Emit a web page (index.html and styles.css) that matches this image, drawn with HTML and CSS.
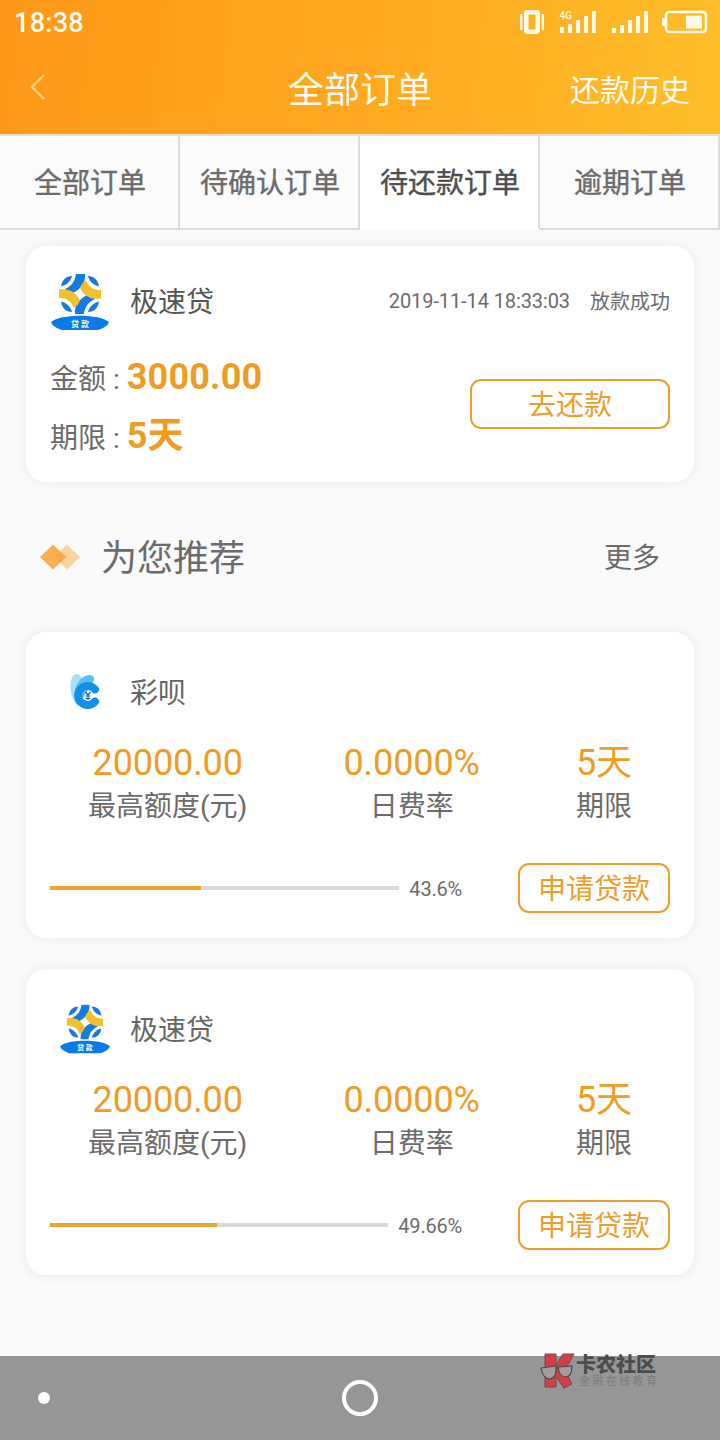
FILE: index.html
```html
<!DOCTYPE html>
<html lang="zh-CN">
<head>
<meta charset="utf-8">
<title>全部订单</title>
<link rel="stylesheet" href="styles.css">
</head>
<body>
<div class="screen">
  <header class="header">
    <div class="status">
      <span class="clock">18:38</span>
      <svg class="status-icons" width="190" height="28" viewBox="0 0 190 28" fill="#fffbe8">
        <path fill-rule="evenodd" d="M7 2H19L21 4V24L19 26H7L5 24V4Z M9.500 6.500V21.500H16.500V6.500Z"/>
        <path d="M1 6H3.500V22H1Z M22.500 6H25V22H22.500Z"/>
        <path d="M41 19h4v6h-4z M49 16h4v9h-4z M57 12h4v13h-4z M65 8h4v17h-4z M73 3h4v22h-4z"/>
        <path d="M93 20h4v5h-4z M101 17h4v8h-4z M109 12h4v13h-4z M117 8h4v17h-4z M125 3h4v22h-4z"/>
        <text class="net-text" x="40.500" y="10.500">4G</text>
        <rect x="147" y="4" width="40" height="20" rx="3.500" fill="none" stroke="#fffbe8" stroke-width="2.600"/>
        <path d="M143 10h3v8h-3z M167 7.500h16v13h-16z"/>
      </svg>
    </div>
    <div class="titlebar">
      <svg class="back" width="18" height="28" viewBox="0 0 18 28"><path d="M16 2 L4 14 L16 26" fill="none" stroke="#ffd080" stroke-width="2.400"/></svg>
      <h1 class="title">全部订单</h1>
      <span class="history">还款历史</span>
    </div>
  </header>
  <nav class="tabs">
    <span class="tab">全部订单</span>
    <span class="tab">待确认订单</span>
    <span class="tab active">待还款订单</span>
    <span class="tab">逾期订单</span>
  </nav>
  <main class="content">
    <section class="card order">
      <div class="order-head">
        <svg class="logo-lg" width="58" height="58" viewBox="0 0 58 58">
          <g id="loan-logo">
            <g fill="#1b76dc">
              <path d="M10 13.500 C11 7 15 3 21 3 C20 8 16 12 10 13.500Z"/>
              <path d="M48 13.500 C47 7 43 3 37 3 C38 8 42 12 48 13.500Z"/>
              <path d="M10 28.500 C11 35 15 39 21 39 C20 34 16 30 10 28.500Z"/>
              <path d="M48 28.500 C47 35 43 39 37 39 C38 34 42 30 48 28.500Z"/>
            </g>
            <path d="M25 1 H34 C35 9 30 16 22 20 C19 20 16 18 14 16 C21 13 24 8 25 1Z" fill="#147be3"/>
            <path d="M33 41 H24 C23 33 28 26 36 22 C39 22 42 24 44 26 C37 29 34 34 33 41Z" fill="#147be3"/>
            <path d="M8 16.500 C17 15 24 18 29 27 C28 30 26 33 23 35 C20 28 16 25 8 25Z" fill="#f1c02d"/>
            <path d="M50 25.500 C41 27 34 24 29 15 C30 12 32 9 35 7 C38 14 42 17 50 17Z" fill="#f1c02d"/>
            <path d="M0 49 C9 40.500 49 40.500 58 49 C56 54 51 55.500 47 57 H11 C7 55.500 2 54 0 49Z" fill="#087be9"/>
            <text class="logo-text" x="29" y="53.500" text-anchor="middle">贷 款</text>
          </g>
        </svg>
        <span class="name">极速贷</span>
        <span class="date">2019-11-14 18:33:03</span>
        <span class="state">放款成功</span>
      </div>
      <div class="order-body">
        <div class="facts">
          <div class="fact">金额 : <b class="strong">3000.00</b></div>
          <div class="fact">期限 : <b class="strong">5天</b></div>
        </div>
        <span class="btn btn-pay">去还款</span>
      </div>
    </section>
    <div class="section-head">
      <svg width="40" height="28" viewBox="0 0 40 28"><path d="M27 1.500L40 14L27 26.500L14 14Z" fill="#fbd49c"/><path d="M13 1.500L26 14L13 26.500L0 14Z" fill="#f9af52"/><path d="M20 8L26 14L20 20L14 14Z" fill="#f9a847"/></svg>
      <h2 class="section-title">为您推荐</h2>
      <span class="more">更多</span>
    </div>
    <section class="card offer">
      <div class="offer-head">
        <svg class="logo-sm" width="50" height="50" viewBox="0 0 50 50">
          <path d="M17 38 C9 30 9 12 14 8 C18 6 22 8 22 14Z" fill="#a5e0f7"/>
          <path d="M18 38 C10 28 17 9 29 8 C34 8 36 12 32 17Z" fill="#56c2f3"/>
          <path d="M35 22.500 A9.500 9.500 0 1 0 35 34.500" fill="none" stroke="#128fe9" stroke-width="8" stroke-linecap="round"/>
          <path d="M25.500 25l2.500 3 2.500-3 M28 28v5 M25.500 29h5 M25.500 31.500h5" fill="none" stroke="#17629b" stroke-width="1.200"/>
        </svg>
        <span class="name">彩呗</span>
      </div>
      <div class="stats">
        <div class="stat"><span class="value">20000.00</span><span class="label">最高额度(元)</span></div>
        <div class="stat"><span class="value">0.0000%</span><span class="label">日费率</span></div>
        <div class="stat"><span class="value">5天</span><span class="label">期限</span></div>
      </div>
      <div class="offer-foot">
        <div class="progress"><div class="track"><div class="fill" style="width:43.1%"></div></div><span class="pct">43.6%</span></div>
        <span class="btn btn-apply">申请贷款</span>
      </div>
    </section>
    <section class="card offer">
      <div class="offer-head">
        <svg class="logo-sm" width="50" height="50" viewBox="0 0 58 58"><use href="#loan-logo"/></svg>
        <span class="name">极速贷</span>
      </div>
      <div class="stats">
        <div class="stat"><span class="value">20000.00</span><span class="label">最高额度(元)</span></div>
        <div class="stat"><span class="value">0.0000%</span><span class="label">日费率</span></div>
        <div class="stat"><span class="value">5天</span><span class="label">期限</span></div>
      </div>
      <div class="offer-foot">
        <div class="progress"><div class="track"><div class="fill" style="width:49.3%"></div></div><span class="pct">49.66%</span></div>
        <span class="btn btn-apply">申请贷款</span>
      </div>
    </section>
  </main>
  <footer class="navbar">
    <span class="dot"></span>
    <span class="ring"></span>
  </footer>
  <div class="watermark">
    <svg width="36" height="36" viewBox="0 0 36 36">
      <path d="M5 1H16V12L23 1H34L25 17L32 31L24 35L16 24V34H5Z" fill="#d23f49" stroke="#704b4f" stroke-width="1"/>
      <path d="M1 15L16 13Q17 25 10 26Q3 26 1 15Z M18 14L32 13Q32 24 25 24Q19 23 18 14Z" fill="#a49c9c" stroke="#504b4b" stroke-width="1.200"/>
      <path d="M16 15L18 15" stroke="#504b4b" stroke-width="1.400"/>
    </svg>
    <div class="mark-text"><span class="mark-name">卡农社区</span><span class="mark-sub">金融在线教育</span></div>
  </div>
</div>
</body>
</html>
```

FILE: styles.css
```css
* { box-sizing: border-box; }
body {
  margin: 0;
  background: #fafafa;
  color: #6b6b6b;
  font-family: Roboto, "Noto Sans CJK SC", sans-serif;
  font-size: 28px;
}
.screen {
  position: relative;
  width: 720px;
  height: 1440px;
  display: flex;
  flex-direction: column;
  overflow: hidden;
}
.header {
  height: 136px;
  background: linear-gradient(98deg, #ff9819 0%, #ffa81f 50%, #febe29 100%);
  border-bottom: 2px solid #eadfce;
  color: #fffaf0;
}
.status {
  height: 44px;
  display: flex;
  justify-content: space-between;
  align-items: center;
  padding: 0 11px 0 14px;
}
.clock { font-size: 27px; font-weight: 500; line-height: 44px; padding-top: 2px; letter-spacing: 0.3px; }
.status-icons { display: block; }
.net-text { font: 500 10px Roboto, sans-serif; }
.titlebar {
  height: 90px;
  display: grid;
  grid-template-columns: 180px 1fr 180px;
  align-items: center;
  padding: 0 30px 0 28px;
}
.back { margin-top: -4px; }
.title { margin: 0; padding: 4px 0 0 2px; text-align: center; font-size: 36px; font-weight: 400; line-height: 60px; }
.history { padding-top: 3px; text-align: right; font-size: 30px; line-height: 60px; }
.tabs { display: grid; grid-template-columns: repeat(4, 1fr); height: 94px; }
.tab {
  height: 94px;
  padding: 3px 0 0 2px;
  border-right: 2px solid #dcdcdc;
  border-bottom: 2px solid #dcdcdc;
  background: #fbfbfb;
  text-align: center;
  line-height: 89px;
  -webkit-text-stroke: 0.4px currentColor;
}
.tab.active { background: #fff; border-bottom-color: #fff; color: #4d4d4d; }
.content { flex: 1; padding: 16px 26px 0; }
.card {
  background: #fff;
  border-radius: 20px;
  box-shadow: 0 0 12px rgba(0, 0, 0, 0.08);
  padding: 24px;
}
.order { height: 236px; }
.order-head { height: 62px; display: flex; align-items: center; }
.logo-lg { margin: 1px 21px 0 1px; }
.logo-text { font: 700 8px "Noto Sans CJK SC", sans-serif; fill: #fff; }
.name { color: #555; line-height: 40px; padding-top: 3px; }
.date { margin-left: auto; font-size: 20px; letter-spacing: -0.1px; }
.state { margin-left: 20px; font-size: 20px; margin-top: -2px; }
.order-body { display: flex; justify-content: space-between; margin-top: 17px; }
.facts { display: flex; flex-direction: column; }
.fact { height: 59px; line-height: 56px; white-space: nowrap; }
.strong { color: #ef9c25; font-size: 36px; font-weight: 700; letter-spacing: 0.2px; }
.btn {
  display: block;
  height: 50px;
  line-height: 49px;
  border: 2px solid #ed9d2a;
  border-radius: 11px;
  color: #ed9d2a;
  text-align: center;
}
.btn-pay { width: 200px; margin-top: 30px; }
.section-head { height: 150px; display: flex; align-items: center; padding: 0 34px 0 14px; }
.section-title { margin: 0 0 0 21px; padding-top: 4px; font-size: 36px; font-weight: 400; line-height: 54px; }
.more { margin-left: auto; margin-top: -2px; }
.offer { height: 306px; }
.offer + .offer { margin-top: 31px; }
.offer-head { height: 72px; display: flex; align-items: center; padding-left: 10px; }
.logo-sm { margin-right: 20px; }
.offer-head .name { color: #666; }
.stats { display: flex; justify-content: space-between; padding: 0 38px; margin-top: 12px; }
.stat { display: flex; flex-direction: column; align-items: center; }
.value { color: #ef9c25; font-size: 36px; line-height: 46px; letter-spacing: -0.1px; }
.label { line-height: 41px; }
.offer-foot { display: flex; justify-content: space-between; align-items: center; margin-top: 36px; }
.progress { width: 412px; display: flex; align-items: center; gap: 10px; }
.track { flex: 1; height: 4px; background: #d9d9d9; margin-top: -1px; }
.fill { height: 4px; background: #eaa42f; }
.pct { font-size: 20px; line-height: 24px; padding-top: 2px; letter-spacing: -0.2px; }
.btn-apply { width: 152px; }
.navbar {
  height: 84px;
  background: #969696;
  display: grid;
  grid-template-columns: 1fr 36px 1fr;
  align-items: center;
}
.dot { width: 12px; height: 12px; margin-left: 38px; border-radius: 50%; background: #fff; }
.ring { width: 36px; height: 36px; border: 4px solid #fff; border-radius: 50%; }
.watermark { position: absolute; left: 540px; top: 1353px; display: flex; }
.mark-text { display: flex; flex-direction: column; padding-top: 1px; }
.mark-name { color: #4c4c4c; font-size: 20px; font-weight: 900; line-height: 22px; }
.mark-sub { color: #7c7c7c; font-size: 11px; line-height: 12px; letter-spacing: 2.4px; margin-left: 3px; }
```
